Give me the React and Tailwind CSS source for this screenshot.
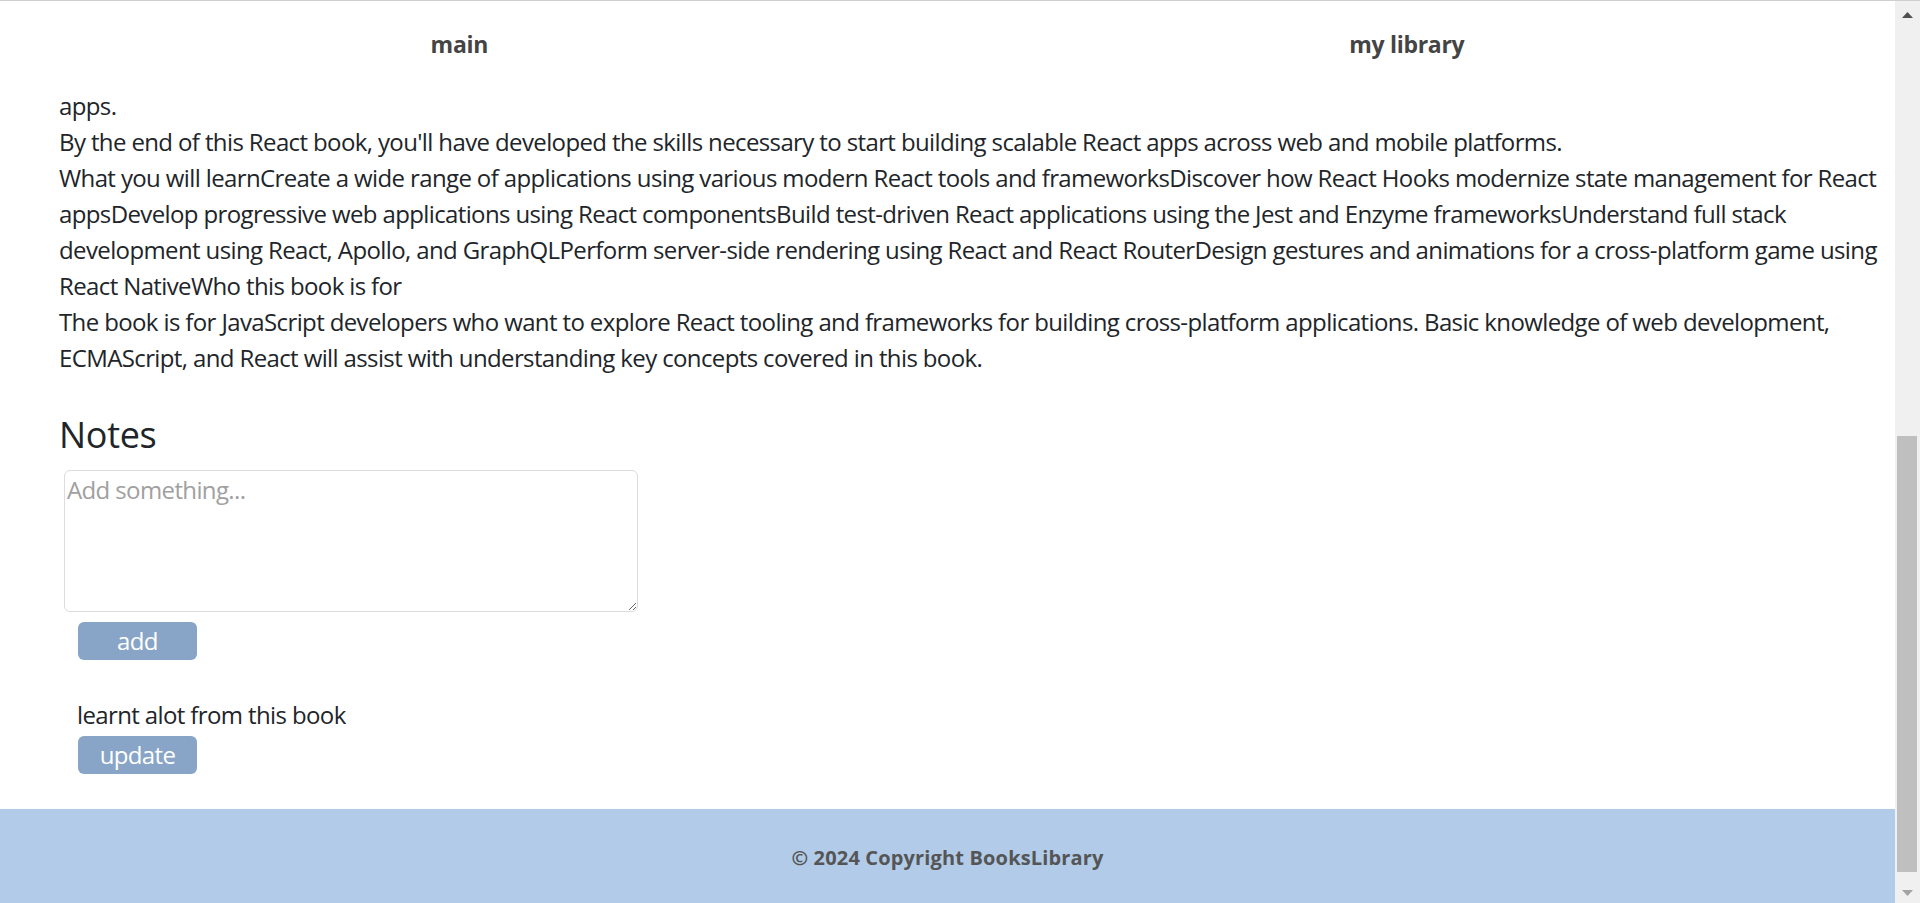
import React from "react";

// the page is scrolled to the bottom: the description starts with the tail of its first paragraph
const description = [
  "apps.",
  "By the end of this React book, you'll have developed the skills necessary to start building scalable React apps across web and mobile platforms.",
  "What you will learnCreate a wide range of applications using various modern React tools and frameworksDiscover how React Hooks modernize state management for React appsDevelop progressive web applications using React componentsBuild test-driven React applications using the Jest and Enzyme frameworksUnderstand full stack development using React, Apollo, and GraphQLPerform server-side rendering using React and React RouterDesign gestures and animations for a cross-platform game using React NativeWho this book is for",
  "The book is for JavaScript developers who want to explore React tooling and frameworks for building cross-platform applications. Basic knowledge of web development, ECMAScript, and React will assist with understanding key concepts covered in this book.",
];

const Header = () => (
  <div className="flex h-[87px] shrink-0 items-center justify-around bg-white text-[23px] font-bold tracking-[-0.3px] text-[#444]">
    <a href="#">main</a>
    <a href="#">my library</a>
  </div>
);

const Footer = () => (
  <div className="flex h-[94px] shrink-0 items-center justify-center bg-[#b1cbe9] pt-[4px] text-[20px] font-bold tracking-[0.15px] text-[#555]">
    © 2024 Copyright BooksLibrary
  </div>
);

const Scrollbar = () => (
  <div className="flex w-[25px] shrink-0 flex-col bg-[#f0f0f0]">
    <div className="flex h-[28px] items-center justify-center">
      <svg width="11" height="6" viewBox="0 0 11 6">
        <path d="M5.5 0L11 6H0z" fill="#505050" />
      </svg>
    </div>
    <div className="flex-1" />
    <div className="ml-[2px] mr-[3px] h-[436px] bg-[#bfbfbf]" />
    <div className="flex h-[31px] items-end justify-center pb-[7px]">
      <svg width="11" height="6" viewBox="0 0 11 6">
        <path d="M0 0H11L5.5 6z" fill="#a3a3a3" />
      </svg>
    </div>
  </div>
);

export default function App() {
  return (
    <div className="flex h-screen border-t border-[#cfcfcf] bg-white font-['Open_Sans',sans-serif] text-[#212529]">
      <div className="flex min-w-0 flex-1 flex-col">
        <Header />

        <div className="flex-1 pb-[35px] pl-[59px] text-[24px] leading-[36px] tracking-[-0.62px]">
          {description.map((line, i) => (
            <p key={i}>{line}</p>
          ))}

          <h2 className="mt-[37px] mb-[14px] text-[36px] font-medium leading-[43px] tracking-[-0.3px]">
            Notes
          </h2>
          <div className="flex flex-col items-start">
            <textarea
              placeholder="Add something..."
              className="ml-[5px] h-[142px] w-[574px] rounded-md border border-[#dcdcdc] px-[2px] py-[1px] outline-none placeholder:text-[#a0a0a0]"
            />
            <button className="mt-[10px] ml-[19px] h-[38px] w-[119px] rounded-md bg-[#88a5c7] text-white">
              add
            </button>

            <p className="mt-[37px] ml-[18px]">learnt alot from this book</p>
            <button className="mt-[3px] ml-[19px] h-[38px] w-[119px] rounded-md bg-[#88a5c7] text-white">
              update
            </button>
          </div>
        </div>

        <Footer />
      </div>

      <Scrollbar />
    </div>
  );
}
